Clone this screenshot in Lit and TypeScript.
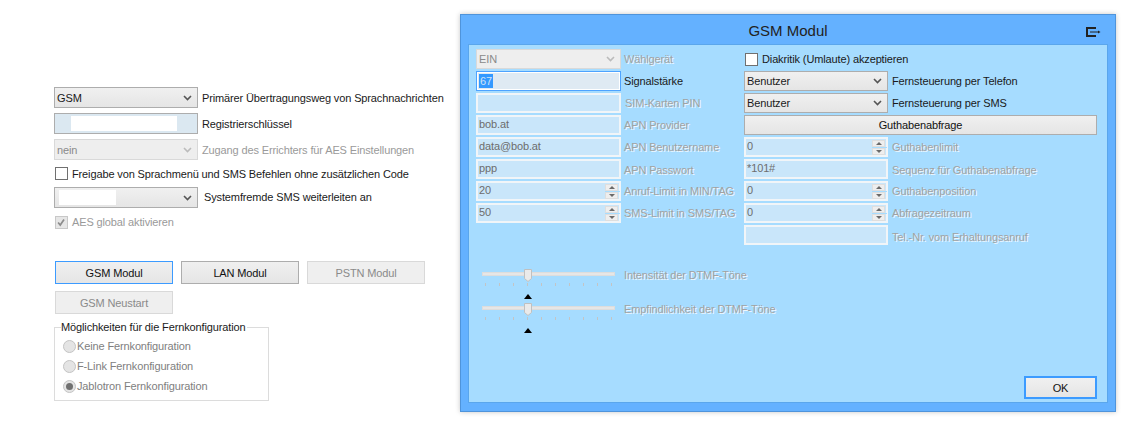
import { LitElement, html, css, svg } from "lit";
import { customElement } from "lit/decorators.js";

const chevron = html`<svg class="chev" width="9" height="6" viewBox="0 0 9 6"><path d="M1 1l3.500 3.500L8 1" fill="none" stroke="currentColor" stroke-width="1.6"/></svg>`;
const check = svg`<path d="M2.500 6.500l2.500 3 4.500-6.500" fill="none" stroke="#8c8c8c" stroke-width="2"/>`;

@customElement("app-root")
export class AppRoot extends LitElement {
  static styles = css`
    :host { display: flex; width: 1130px; height: 440px; background: #fff; overflow: hidden;
      font: 11px/14px Tahoma, "Liberation Sans", sans-serif; letter-spacing: -0.13px; color: #1a1a1a; box-sizing: border-box; }
    * { box-sizing: border-box; }
    .left { width: 460px; flex: none; padding: 87px 0 0 54px; display: flex; flex-direction: column; }
    .row { display: flex; align-items: center; gap: 4px; height: 21px; margin-bottom: 5px; white-space: nowrap; }
    .w144 { width: 144px; }
    .select { height: 21px; display: flex; align-items: center; justify-content: space-between; padding: 0 5px 0 2px;
      border: 1px solid #adadad; background: linear-gradient(#f0f0f0, #e5e5e5); color: #1a1a1a; flex: none; position: relative; }
    .select .chev { color: #555; }
    .select.off { background: #eee; border-color: #d9d9d9; color: #8a8a8a; }
    .select.off .chev { color: #bbb; }
    .input { height: 21px; border: 2px solid #f1f5f8; background: #c9e6fa; color: #6d6d6d; display: flex; align-items: center;
      padding: 0 0 2px 1px; position: relative; flex: none; }
    .input.focus { border: 1px solid #4da3ff; background: #dfeaf3; padding: 1px 0 1px 1px; box-shadow: inset 0 0 0 1px #fff; }
    .sel { background: #3399ff; color: #cfe4f7; padding: 0 1px; line-height: 14px; margin-left: 1px; }
    .key { border: 1px solid #adadad; background: #dbe8f1; padding: 2px 0 2px 16px; }
    .key i { display: block; width: 106px; height: 15px; background: #fff; }
    .mask { position: absolute; left: 4px; top: 2px; width: 57px; height: 15px; background: #fff; }
    .muted { color: #9a9a9a; }
    .sys { margin-left: 2px; position: relative; top: -1px; }
    .cb { width: 13px; height: 13px; border: 1px solid #707070; background: #fff; flex: none; }
    .cb.off { border-color: #c8c8c8; background: #e6e6e6; }
    .checkrow { height: 13px; margin: 2px 0 7px 1px; }
    .aes { margin: 1px 0 0 1px; height: 16px; }
    .btns { display: grid; grid-template-columns: repeat(3, 118px); gap: 7px 8px; margin: 31px 0 0 1px; }
    .btn { height: 23px; border: 1px solid #adadad; background: linear-gradient(#f0f0f0, #e5e5e5); display: flex;
      align-items: center; justify-content: center; color: #111; white-space: nowrap; }
    .btn.focus { border-color: #3c9bff; }
    .btn.off { background: #efefef; border-color: #d9d9d9; color: #8a8a8a; }
    fieldset { margin: 8px 0 0; padding: 0 0 0 8px; width: 215px; height: 79px; border: 1px solid #dcdcdc; }
    legend { margin-left: -2px; padding: 0 2px 0 0; line-height: 10px; height: 10px; color: #1a1a1a; background: #fff; white-space: nowrap; }
    .radio { display: flex; align-items: center; gap: 1px; height: 20px; color: #808080; white-space: nowrap; position: relative; top: 4px; }
    .radio b { width: 13px; height: 13px; border-radius: 50%; background: #e4e4e4; border: 1px solid #c4c4c4; display: flex;
      align-items: center; justify-content: center; flex: none; }
    .radio b.on::after { content: ""; width: 7px; height: 7px; border-radius: 50%; background: #707070; }

    .window { position: relative; width: 656px; height: 398px; margin-top: 14px; background: #64b1ff; border: 1px solid #4f94db;
      box-shadow: 0 0 5px rgba(0,0,0,.22); padding: 29px 7px 8px 7px; flex: none; }
    .title { position: absolute; left: 0; right: 0; top: 6px; text-align: center; font-size: 15px; line-height: 20px; color: #222; letter-spacing: 0; }
    .menu { position: absolute; left: 625px; top: 12px; }
    .client { height: 100%; background: #a6dcff; border: 1px solid #5aa6ec; padding: 4px 0 3px 7px; display: flex; flex-direction: column; }
    .grid { display: grid; grid-template-columns: 145px 123px 144px 1fr; grid-auto-rows: 20px; row-gap: 2px; align-items: center; }
    .grid .select, .grid .input { height: 20px; }
    .lab { color: #a2a2a2; text-shadow: 1px 1px 0 #eef8ff; padding-left: 3px; white-space: nowrap; position: relative; }
    .lab.on { color: #1a1a1a; text-shadow: none; }
    .lab.shift { padding-left: 4px; }
    .lab.r { padding-left: 4px; }
    .lab.d1 { top: 1px; }
    .lab.d2 { top: 2px; }
    .dia { grid-column: 3 / span 2; display: flex; align-items: center; gap: 4px; padding-left: 1px; color: #1a1a1a; }
    .wide { grid-column: 3 / span 2; width: 353px; height: 20px; }
    .spin { position: absolute; right: 1px; top: 0; bottom: 0; width: 13px; display: flex; flex-direction: column; justify-content: center; gap: 1px; }
    .spin span { height: 7px; background: #eee; border: 1px solid #dedede; display: flex; align-items: center; justify-content: center; }
    .spin span::after { content: ""; border: 3px solid transparent; border-top: 0; border-bottom: 3px solid #6a6a6a; }
    .spin span + span::after { transform: scaleY(-1); }
    .spin::before { content: ""; position: absolute; left: 0; right: -2px; top: 8px; height: 1px; background: #a6dcff; }
    .sliders { margin-top: 21px; display: flex; flex-direction: column; gap: 2px; }
    .sl { display: flex; height: 32px; align-items: flex-start; }
    .sl .box { width: 145px; flex: none; position: relative; height: 32px; }
    .track { position: absolute; left: 6px; top: 6px; width: 133px; height: 4px; background: #e6e6e6; border: 1px solid #ddd; }
    .ticks { position: absolute; left: 9px; top: 17px; display: flex; gap: 13px; }
    .ticks i { width: 1px; height: 3px; background: #c4c4c4; }
    .thumb { position: absolute; left: 48px; top: 3px; }
    .tri { position: absolute; left: 48px; top: 28px; }
    .sl .lab { padding-left: 3px; top: 2px; }
    .foot { margin-top: auto; display: flex; justify-content: flex-end; padding-right: 10px; }
    .ok { width: 73px; height: 23px; border: 2px solid #3c9bff; }
  `;

  sel(t: string, off = false) {
    return html`<div class="select ${off ? "off" : ""}"><span>${t}</span>${chevron}</div>`;
  }
  inp(t: string) {
    return html`<div class="input"><span>${t}</span></div>`;
  }
  num(t: string) {
    return html`<div class="input"><span>${t}</span><div class="spin"><span></span><span></span></div></div>`;
  }
  slider(label: string) {
    const ticks = Array.from({ length: 10 });
    return html`<div class="sl"><div class="box"><div class="track"></div>
      <div class="ticks">${ticks.map(() => html`<i></i>`)}</div>
      <svg class="thumb" width="8" height="13" viewBox="0 0 8 13"><path d="M.5.5h7v9l-3.500 3-3.500-3z" fill="#eaeaea" stroke="#c0c0c0"/></svg>
      <svg class="tri" width="8" height="5" viewBox="0 0 8 5"><path d="M4 0l4 5H0z" fill="#000"/></svg>
      </div><div class="lab">${label}</div></div>`;
  }
  render() {
    return html`
      <div class="left">
        <div class="row"><div class="select w144"><span>GSM</span>${chevron}</div><span>Primärer Übertragungsweg von Sprachnachrichten</span></div>
        <div class="row"><div class="key w144"><i></i></div><span>Registrierschlüssel</span></div>
        <div class="row"><div class="select off w144"><span>nein</span>${chevron}</div><span class="muted">Zugang des Errichters für AES Einstellungen</span></div>
        <div class="row checkrow"><span class="cb"></span><span>Freigabe von Sprachmenü und SMS Befehlen ohne zusätzlichen Code</span></div>
        <div class="row"><div class="select w144"><i class="mask"></i><span></span>${chevron}</div><span class="sys">Systemfremde SMS weiterleiten an</span></div>
        <div class="row aes"><svg class="cb off" width="13" height="13" viewBox="0 0 13 13">${check}</svg><span class="muted">AES global aktivieren</span></div>
        <div class="btns">
          <div class="btn focus">GSM Modul</div><div class="btn">LAN Modul</div><div class="btn off">PSTN Modul</div>
          <div class="btn off">GSM Neustart</div>
        </div>
        <fieldset>
          <legend>Möglichkeiten für die Fernkonfiguration</legend>
          <div class="radio"><b></b>Keine Fernkonfiguration</div>
          <div class="radio"><b></b>F-Link Fernkonfiguration</div>
          <div class="radio"><b class="on"></b>Jablotron Fernkonfiguration</div>
        </fieldset>
      </div>
      <div class="window">
        <div class="title">GSM Modul</div>
        <svg class="menu" width="15" height="10" viewBox="0 0 15 10"><path d="M10 1H1v8h9" fill="none" stroke="#222" stroke-width="2"/><path d="M4 5h9" fill="none" stroke="#222" stroke-width="1"/><path d="M12 3.500L14.500 5 12 6.500z" fill="#222"/></svg>
        <div class="client">
          <div class="grid">
            ${this.sel("EIN", true)}<div class="lab">Wählgerät</div><div class="dia"><span class="cb"></span>Diakritik (Umlaute) akzeptieren</div>
            <div class="input focus"><span class="sel">67</span></div><div class="lab on">Signalstärke</div>${this.sel("Benutzer")}<div class="lab on r">Fernsteuerung per Telefon</div>
            ${this.inp("")}<div class="lab shift">SIM-Karten PIN</div>${this.sel("Benutzer")}<div class="lab on r">Fernsteuerung per SMS</div>
            ${this.inp("bob.at")}<div class="lab">APN Provider</div><div class="btn wide">Guthabenabfrage</div>
            ${this.inp("data@bob.at")}<div class="lab">APN Benutzername</div>${this.num("0")}<div class="lab r">Guthabenlimit</div>
            ${this.inp("ppp")}<div class="lab d1">APN Passwort</div>${this.inp("*101#")}<div class="lab r d1">Sequenz für Guthabenabfrage</div>
            ${this.num("20")}<div class="lab">Anruf-Limit in MIN/TAG</div>${this.num("0")}<div class="lab r">Guthabenposition</div>
            ${this.num("50")}<div class="lab">SMS-Limit in SMS/TAG</div>${this.num("0")}<div class="lab r">Abfragezeitraum</div>
            <div></div><div></div>${this.inp("")}<div class="lab r d2">Tel.-Nr. vom Erhaltungsanruf</div>
          </div>
          <div class="sliders">${this.slider("Intensität der DTMF-Töne")}${this.slider("Empfindlichkeit der DTMF-Töne")}</div>
          <div class="foot"><div class="btn ok">OK</div></div>
        </div>
      </div>`;
  }
}
